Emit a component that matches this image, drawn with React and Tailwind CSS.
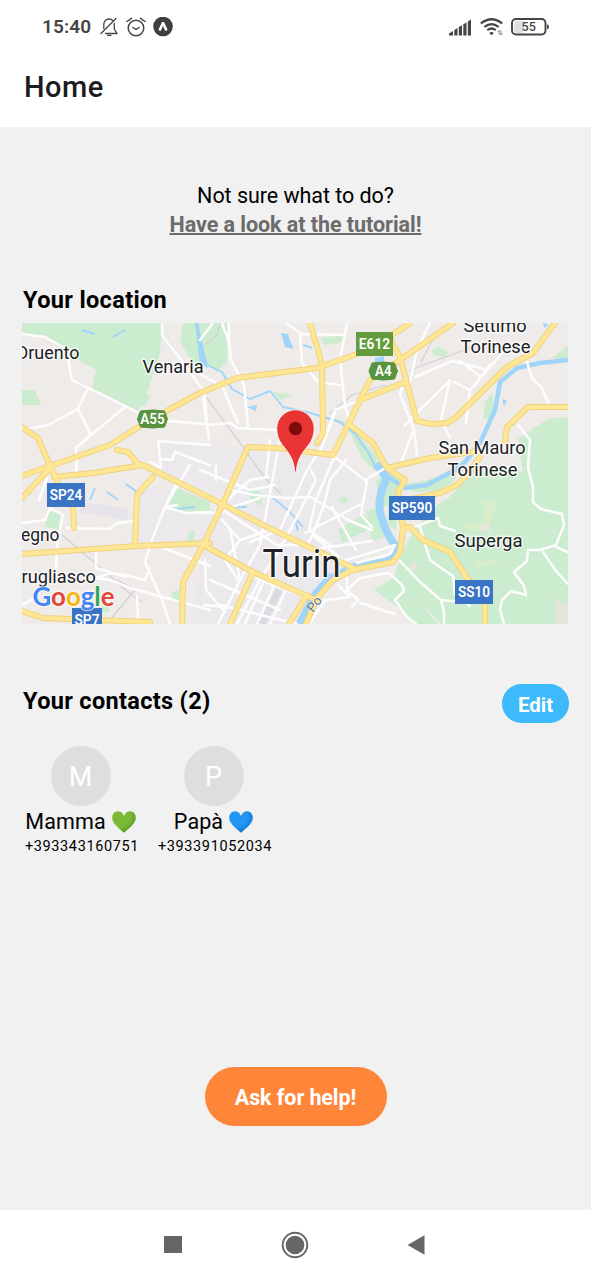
import React from 'react';

const PARKS = [
  'M22 323H162L160 353 148 390 137 412 120 402 92 388 96 370 70 355 45 337 22 335Z',
  'M22 390H35L41 405H22Z',
  'M143 393L151 396 145 405 140 408Z',
  'M183 323H227V362L217 372 205 362 196 368 186 352 180 340Z',
  'M320 338L345 335 340 343 325 345Z',
  'M272 392L293 395 280 400Z',
  'M331 416L348 424 363 440 376 455 380 470 372 468 362 458 350 432Z',
  'M568 346L552 358 568 360Z',
  'M492 393L485 402 483 418 490 420 494 405Z',
  'M432 350L438 346 448 352 446 357 433 355Z',
  'M177 488L210 502V512L184 512 167 508Z',
  'M48 511L61 514 58 529 45 527Z',
  'M248 487L262 493 262 506 250 500Z',
  'M338 529L364 514 373 527 342 543Z',
  'M366 511L377 508 388 530 385 537 372 541Z',
  'M376 482L392 465 402 484 393 505 381 508Z',
  'M388 482L401 484 396 530 388 524Z',
  'M338 500L344 496 349 500 342 504Z',
  'M171 593L179 590V604L172 600Z',
  'M188 533L195 529 194 540 188 541Z',
  'M98 608L108 606 110 612 100 612Z',
  'M402 485L428 480 458 468 455 480 440 491 415 492Z',
  'M518 439L534 428 548 419 568 417V624H441L418 600 394 577 402 552 410 537 430 510 450 497 467 478 500 466 523 472Z',
  'M374 590L394 577 418 600 438 624H415L395 605Z',
];
const CLEARINGS = [
  'M483 500L498 501 486 532Z',
  'M461 525L485 522 484 532 470 529Z',
  'M471 561L503 560 480 568Z',
];
const BARE = [
  'M556 597L563 605 568 600V624H556Z',
  'M407 569L414 561 420 569 413 571Z',
  'M477 528L488 522 492 532Z',
];
const DISTRICTS = [
  'M235 450L330 458 380 480 370 510 392 545 345 567 300 624H190L205 545 240 480Z',
  'M155 440L240 448 228 500 160 470Z',
  'M140 480L215 510 205 545 140 545Z',
];
const STREAMS = [
  'M196 323L199 340 207 365 222 372 232 389 250 399 270 391 283 407 307 412 340 422 355 434 368 452 377 470',
  'M160 332L175 351M82 330L95 334M113 337L125 330',
  'M107 492L118 500M126 484L137 492M90 500L95 488M176 509L195 507M236 507H247',
  'M257 495L272 497 290 512 303 527M295 519L298 531M303 345L312 348',
];
const RAILS = [
  'M206 397L240 443 265 478 281 494M205 345L217 335 220 323',
  'M386 385L352 395 329 414M410 370L470 348M421 362L436 333',
  'M62 535L95 563 130 594 143 602M110 620L135 590 117 580',
];
const SIDE = [
  'M22 334L45 337 66 349 72 380 137 412M88 388L78 409 91 435M22 430L48 425 78 409M125 407L91 435 76 448 77 475',
  'M162 323L162 335 175 352 203 390 204 405 209 440M168 421L205 424',
  'M158 441L210 445M158 441L161 468 150 462M161 459L172 460 175 452 210 465M222 323L229 342 231 360 244 385 248 426',
  'M229 323V342M200 340L213 323M200 374L222 386 238 423M205 395L207 425 231 423 237 428 276 430',
  'M286 323L300 333 302 363 318 382 340 385M300 334L345 335M347 323L340 360 345 406 351 424',
  'M335 413L322 447 307 470 280 530M360 400L335 410 322 447',
  'M402 385L400 395 414 429 417 455M414 429L402 460M450 380L405 425M430 323L417 350 410 382',
  'M415 377L452 361 484 369M460 361L481 377 505 350M454 382L470 390 481 377M450 380L441 420 450 438M470 390L466 423M490 365L475 385',
  'M527 362L532 378 542 388 549 404M518 425L530 440 528 468 533 487 533 502 541 509 562 514 564 525 556 545 540 550 528 550',
  'M415 527L438 518 440 526 455 531M420 527L430 560 444 570 453 576 455 594 470 606M400 561L420 582 441 600 462 602',
  'M528 550L527 561 514 572 524 586 526 595 511 591 502 600 500 609 504 624M543 552L556 571 568 584M556 547L568 552',
  'M390 574L402 585 404 591 395 600 407 617 416 624M441 600L444 612V624',
  'M39 500L47 478M50 508L45 520 22 523M50 508L63 515 57 545 56 570M67 528L110 529 117 523 135 521M76 465L77 473',
  'M177 505L165 507 152 540 145 562 163 602 170 624M150 568L145 580 125 575 112 573 95 578 110 580 130 588 210 610M96 553V568L125 577',
  'M156 545L210 566M137 596L138 620M205 560L206 590 225 612M22 605L35 598',
  'M165 507L186 513 210 512M178 480L165 507M190 465L176 488 165 507',
  'M200 470L250 490 275 485M225 502L250 480 268 477M230 490L255 495 285 498 311 497 348 520 372 530',
  'M280 440L260 545 240 580 218 624M311 470L316 480 285 540 257 585 237 624M335 455L316 500 309 530 330 545',
  'M332 455L365 480M346 460L330 480 324 505 313 534 307 545M365 480L387 467M367 480L361 515 372 527',
  'M223 510L277 545 300 545M223 510L260 498M230 530L240 580M222 520L240 540 225 560 238 580M203 513L222 513',
  'M305 533L363 503M313 535L342 560M372 541L322 548M395 545L370 553 346 560M395 545L390 554 357 563',
  'M240 540L270 530M250 542L275 532M216 465L216 480M332 507L356 550M270 440L266 477',
  'M220 605L297 624M210 580L280 610M256 578L303 596M263 582L245 624M274 586L257 624M285 592L270 624M204 605L225 607',
  'M347 570L347 590 358 600 352 606M338 585L350 597 325 600 309 624M346 591L360 578 388 573M360 603L395 614',
];
const MAIN = [
  'M22 476L50 466 110 445 137 428 170 409 200 393 237 378 317 368 357 354 400 330 410 323',
  'M310 323L318 350 322 367 323 433 317 443',
  'M182 624L183 582 203 545 222 506 240 465 248 447 277 448 333 455 349 423 360 400 370 380 400 360 453 323',
  'M360 400L403 383M390 337L393 345 400 357 417 421 432 424 447 423 455 418 507 367 533 353 555 323',
  'M350 425L373 443 387 468 405 480M387 468L430 458 473 452',
  'M405 480L398 492 403 528 400 552 393 562 353 570 333 580 317 598 306 624',
  'M402 501L440 493 457 485 467 475 480 457M505 442L507 427 528 407H568',
  'M22 427L38 438 50 466 60 487 73 507 74 528M22 498L50 468M54 477L93 473 143 465 210 498 267 527 353 568',
  'M117 450L128 452 138 464M22 554L137 546 210 543M153 477L137 495 135 546M203 545L253 572 312 598M253 572L230 624M305 598L289 624',
  'M403 528L410 527 423 540 450 552 465 575 485 605V624M22 611L43 618 150 622',
];

function MapLabel({ x, y, size = 18.3, w, children }) {
  return (
    <text x={x} y={y} fontSize={size} textLength={w} lengthAdjust="spacingAndGlyphs"
      fill="#202124" stroke="#fff" strokeWidth="3" strokeOpacity=".7" strokeLinejoin="round" paintOrder="stroke">
      {children}
    </text>
  );
}

function Shield({ x, y, w, h = 24, color = '#3a74c6', label, textW }) {
  return (
    <g>
      <rect x={x} y={y} width={w} height={h} fill={color} />
      <text x={x + w / 2} y={y + h / 2 + 5.1} fontSize="14.2" fontWeight="600" fill="#fff" textAnchor="middle"
        textLength={textW} lengthAdjust="spacingAndGlyphs">{label}</text>
    </g>
  );
}

function MotorwayShield({ x, y, w, h = 18, label, textW }) {
  const r = x + w;
  const b = y + h;
  return (
    <g>
      <path d={`M${x + 3} ${y + 1}Q${x + w / 2} ${y - 1} ${r - 3} ${y + 1}L${r} ${y + h / 2} ${r - 3} ${b - 1}Q${x + w / 2} ${b + 1} ${x + 3} ${b - 1}L${x} ${y + h / 2}Z`}
        fill="#589340" stroke="#589340" strokeLinejoin="round" />
      <text x={x + w / 2} y={y + h / 2 + 5} fontSize="14" fontWeight="600" fill="#fff" textAnchor="middle"
        textLength={textW} lengthAdjust="spacingAndGlyphs">{label}</text>
    </g>
  );
}

function LocationMap() {
  return (
    <svg viewBox="22 323 546 301" className="block h-[301px] w-[546px]" fontFamily="Roboto, sans-serif">
      <rect x="22" y="323" width="546" height="301" fill="#eeebe9" />
      {DISTRICTS.map((d) => <path key={d} d={d} fill="#ece9ed" />)}
      <path d="M85 503L128 508 128 520 78 512Z" fill="#e6e3ea" />
      {PARKS.map((d) => <path key={d} d={d} fill="#cbecce" />)}
      {CLEARINGS.map((d) => <path key={d} d={d} fill="#d9edcb" />)}
      {BARE.map((d) => <path key={d} d={d} fill="#e6e5da" />)}
      <g fill="#a0d5f9">
        <path d="M281 333L288 334 290 341 294 349 285 347Z" />
        <path d="M247 407L257 405 256 411Z" />
        <path d="M375 358L384 356V362H375Z" />
        <path d="M502 399L507 401 504 406Z" />
        <path d="M543 323L549 325 544 328Z" />
        <path d="M195 323H198L208 368 200 364Z" />
      </g>
      <g fill="none" stroke="#a0d5f9" strokeLinejoin="round">
        {STREAMS.map((d) => <path key={d} d={d} strokeWidth="1.9" />)}
        <path d="M568 360L540 363 517 368 500 382 495 410 480 443 465 462 453 471 427 485 405 488 390 478" strokeWidth="4.5" />
        <path d="M376 464L387 478Q376 498 381 516 386 534 397 548" strokeWidth="8" />
        <path d="M397 546Q396 557 384 560L352 565 330 577" strokeWidth="3.5" />
        <path d="M332 575L315 594 299 624" strokeWidth="7" />
      </g>
      <g fill="none" stroke="#d3d1d6" strokeWidth="1.3">
        {RAILS.map((d) => <path key={d} d={d} />)}
      </g>
      <path d="M279 590L262 624" stroke="#d9dbe0" strokeWidth="7" />
      <g fill="none" stroke="#fdfdfd" strokeWidth="2.5" strokeLinejoin="round" strokeLinecap="round">
        {SIDE.map((d) => <path key={d} d={d} />)}
      </g>
      <g fill="none" stroke="#f1d07c" strokeWidth="6" strokeLinejoin="round" strokeLinecap="round">
        {MAIN.map((d) => <path key={d} d={d} />)}
      </g>
      <g fill="none" stroke="#fde795" strokeWidth="4.2" strokeLinejoin="round" strokeLinecap="round">
        {MAIN.map((d) => <path key={d} d={d} />)}
      </g>
      <MapLabel x={16.5} y={359} w={63}>Druento</MapLabel>
      <MapLabel x={142.5} y={373} w={61}>Venaria</MapLabel>
      <MapLabel x={463.5} y={331.5} w={63}>Settimo</MapLabel>
      <MapLabel x={460.5} y={353} w={70}>Torinese</MapLabel>
      <MapLabel x={438.5} y={454} w={87}>San Mauro</MapLabel>
      <MapLabel x={447.5} y={475.5} w={70}>Torinese</MapLabel>
      <MapLabel x={454.5} y={547} w={68}>Superga</MapLabel>
      <MapLabel x={21} y={541} w={38.5}>egno</MapLabel>
      <MapLabel x={21.5} y={582.5} w={74.5}>rugliasco</MapLabel>
      <text x="313" y="613" fontSize="13" fill="#5b7791" stroke="#fff" strokeWidth="1.5" strokeOpacity=".6" paintOrder="stroke" transform="rotate(-52 313 613)">Po</text>
      <MapLabel x={262.5} y={576.5} size={38} w={78}>Turin</MapLabel>
      <Shield x={356} y={332} w={37} color="#649b3e" label="E612" textW={31.5} />
      <MotorwayShield x={137.5} y={410} w={30} label="A55" textW={24.5} />
      <MotorwayShield x={369} y={362} w={28.5} label="A4" textW={16.5} />
      <Shield x={47} y={483} w={38} label="SP24" textW={32.5} />
      <Shield x={389} y={496} w={46} label="SP590" textW={40.5} />
      <Shield x={455} y={580} w={38} label="SS10" textW={32} />
      <Shield x={72} y={608} w={30} label="SP7" textW={25} />
      <text x="32.500" y="606" fontSize="26" fontFamily="Lato, sans-serif" fontWeight="700" textLength="82" lengthAdjust="spacingAndGlyphs"
        stroke="#fff" strokeWidth="2.5" strokeOpacity=".6" paintOrder="stroke">
        <tspan fill="#4285f4">G</tspan><tspan fill="#e2473a">o</tspan><tspan fill="#f4b70a">o</tspan><tspan fill="#4285f4">g</tspan><tspan fill="#36a455">l</tspan><tspan fill="#e2473a">e</tspan>
      </text>
      <path d="M294.500 471C294 460 289 453 282 444.500 278.500 440 276.700 434 276.700 428.500A18.700 18.700 0 0 1 314.200 428.500C314.200 434 312.500 440 309 444.500 302 453 297 460 296.500 471Q295.500 472.500 294.500 471Z" fill="#e93434" stroke="#fff" strokeWidth="1" strokeOpacity=".85" />
      <circle cx="295.500" cy="428.500" r="6.700" fill="#7e0c0c" />
    </svg>
  );
}

function Heart({ id, light, dark }) {
  return (
    <svg viewBox="0 0 24 22" className="h-[22px] w-6">
      <defs>
        <radialGradient id={id} cx=".3" cy=".25" r=".85">
          <stop offset="0" stopColor={light} />
          <stop offset=".55" stopColor={light} />
          <stop offset="1" stopColor={dark} />
        </radialGradient>
      </defs>
      <path fill={`url(#${id})`} d="M12 5C10.500 1.500 8.500.3 6 .3 2.500.3.2 3.200.2 6.800.2 13 7.500 17.500 12 21.800 16.500 17.500 23.800 13 23.800 6.800 23.800 3.200 21.500.3 18 .3 15.500.3 13.500 1.500 12 5Z" />
    </svg>
  );
}

function Contact({ initial, name, phone, heart }) {
  return (
    <li className="flex w-[133px] flex-col items-center">
      <div className="flex h-[60px] w-[60px] items-center justify-center rounded-full bg-[#dedede] pt-[3px] text-[27px] text-white">{initial}</div>
      <div className="flex h-8 items-center gap-[6px] text-[21.5px] tracking-[0.1px]"><span>{name}</span>{heart}</div>
      <div className="pl-[3px] text-[14.5px] leading-[17px] tracking-[0.63px]">{phone}</div>
    </li>
  );
}

function StatusBar() {
  return (
    <div className="flex h-[54px] items-center justify-between pr-[41px] pl-[42px] text-[#454545]">
      <div className="flex items-center">
        <span className="w-[58px] text-[19px] font-semibold tracking-[0.1px]">15:40</span>
        <svg viewBox="0 0 18 20" className="h-5 w-[18px]" fill="none" stroke="currentColor" strokeWidth="1.300" strokeLinecap="round" strokeLinejoin="round">
          <path d="M1 16.500 16 1.500M3.800 11.500V7.500C3.800 4 6 2 9 2 10.700 2 12 2.600 13 3.700M14.300 6.500V12L17 16.500H5.500M7.500 18.300H11" />
        </svg>
        <svg viewBox="0 0 20 20" className="ml-[8px] h-5 w-5" fill="none" stroke="currentColor" strokeWidth="1.500" strokeLinecap="round" strokeLinejoin="round">
          <circle cx="10" cy="11" r="7.800" /><path d="M1 4.500 5.500 1.300M14.500 1.300 19 4.500M7 10.500 10 12.500 13 10.500" />
        </svg>
        <svg viewBox="0 0 20 20" className="ml-[7px] h-5 w-5">
          <circle cx="10" cy="9.500" r="9.800" fill="#3f3f3f" />
          <path d="M9 5H11L14.500 12.500 13.300 14 12 13.500 10 8.800 8 13.500 6.700 14 5.500 12.500Z" fill="#fff" />
        </svg>
      </div>
      <div className="flex items-center">
        <svg viewBox="0 0 23 17" className="h-[17px] w-[23px]" fill="currentColor">
          <path d="M0 16.500V14.500L4 12V16.500ZM5.300 16.500V11L8.500 9V16.500ZM9.800 16.500V8L13 6.200V16.500ZM14.300 16.500V5.200L17.500 3.400V16.500ZM18.800 16.500V2.500L22 .5V16.500Z" />
        </svg>
        <svg viewBox="0 0 24 20" className="ml-2 h-5 w-6" fill="none" stroke="currentColor" strokeWidth="2.200">
          <path d="M.8 6.500Q11.500-2 22.200 6.500M4.300 10Q11.500 4.300 18.700 10M7.300 13.200Q11.500 9.800 15.700 13.200" />
          <path d="M9.200 16Q11.500 14 13.800 16L11.500 18.300Z" fill="currentColor" stroke="none" />
          <path d="M19.200 18V13.500L17.700 15M21 13.500V18L22.500 16.500" strokeWidth=".9" strokeOpacity=".7" />
        </svg>
        <svg viewBox="0 0 39 18" className="ml-[7px] h-[18px] w-[39px]" fontFamily="Roboto, sans-serif">
          <path d="M5 3H12V15H5Q3 15 3 13V5Q3 3 5 3Z" fill="#e1e1e1" />
          <rect x="1" y="1" width="33.500" height="15.500" rx="4" fill="none" stroke="currentColor" strokeWidth="1.900" />
          <path d="M36 6.300Q38 6.800 38 8.800T36 11.300Z" fill="currentColor" />
          <text x="17.700" y="13.400" fontSize="12.500" fontWeight="500" textAnchor="middle" fill="currentColor">55</text>
        </svg>
      </div>
    </div>
  );
}

export default function App() {
  return (
    <div className="flex h-[1280px] w-[591px] flex-col overflow-hidden bg-[#f1f1f1] font-['Roboto',sans-serif] text-black">
      <header className="h-[127px] bg-white">
        <StatusBar />
        <h1 className="pt-[11px] pl-6 text-[29px] leading-[44px] font-medium tracking-[0.5px] text-[#1c1c1e]">Home</h1>
      </header>
      <main className="flex flex-1 flex-col px-[22px]">
        <section className="pt-[54px] text-center text-[21.5px] leading-[29px]">
          <p className="tracking-[-0.05px]">Not sure what to do?</p>
          <a className="font-bold tracking-[-0.05px] text-[#6b6b6b] underline decoration-[1.5px]">Have a look at the tutorial!</a>
        </section>
        <h2 className="mt-[45px] mb-[7px] pl-px text-[23.5px] leading-8 font-bold tracking-[0.35px]">Your location</h2>
        <LocationMap />
        <div className="mt-[60px] flex h-[39px] items-center justify-between">
          <h2 className="pb-[3px] pl-px text-[23.5px] font-bold tracking-[0.33px]">Your contacts (2)</h2>
          <button className="-mr-px flex h-[39px] w-[67px] -translate-x-px items-center justify-center rounded-full bg-[#3cbafc] pt-[3px] text-[20.5px] font-bold text-white">Edit</button>
        </div>
        <ul className="mt-[23px] -ml-[8px] flex">
          <Contact initial="M" name="Mamma" phone="+393343160751" heart={<Heart id="heart-green" light="#7cb936" dark="#4f8f22" />} />
          <Contact initial="P" name="Papà" phone="+393391052034" heart={<Heart id="heart-blue" light="#2196f3" dark="#1266cf" />} />
        </ul>
        <button className="mt-auto mb-[84px] flex h-[59px] w-[182px] items-center justify-center self-center rounded-full bg-[#ff8539] pt-[3px] text-[21.5px] font-bold tracking-[-0.1px] text-white">Ask for help!</button>
      </main>
      <nav className="flex h-[70px] items-center justify-between bg-white pr-[166px] pb-px pl-[164px]">
        <div className="h-[17px] w-[18px] bg-[#666]" />
        <svg viewBox="0 0 28 28" className="ml-px h-7 w-7"><circle cx="14" cy="14" r="12.300" fill="none" stroke="#666" strokeWidth="1.900" /><circle cx="14" cy="14" r="9.300" fill="#666" /></svg>
        <svg viewBox="0 0 18 20" className="h-5 w-[18px]"><path d="M.5 10 17.500.2V19.800Z" fill="#666" /></svg>
      </nav>
    </div>
  );
}
